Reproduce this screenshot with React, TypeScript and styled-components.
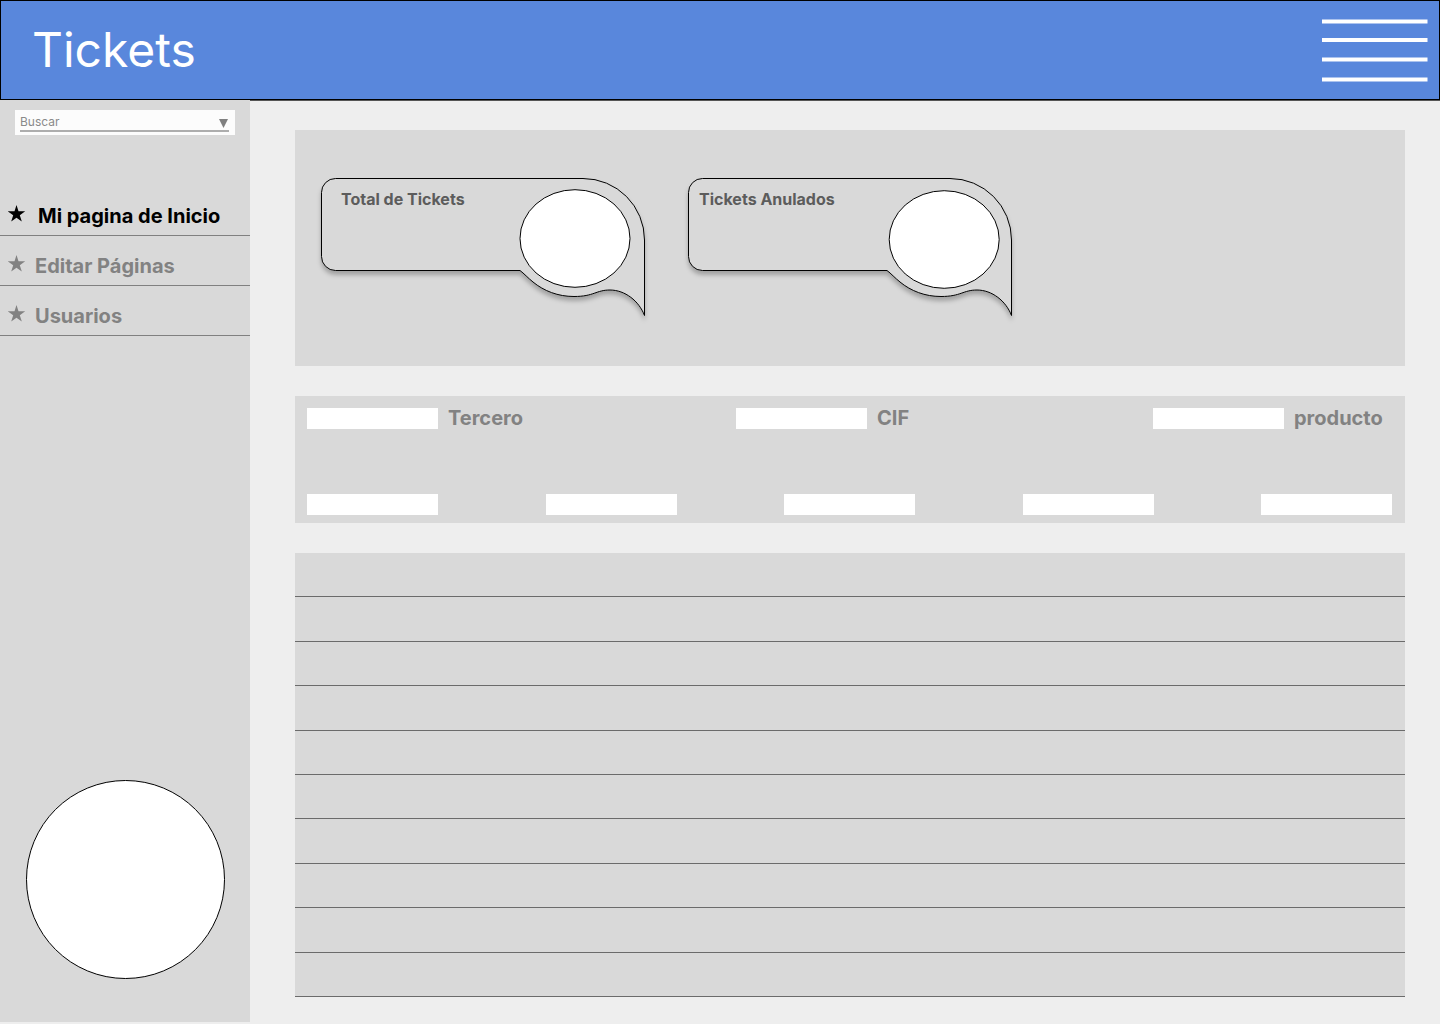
import React from "react";
import styled, { createGlobalStyle } from "styled-components";

const GlobalStyle = createGlobalStyle`
  *, *::before, *::after { box-sizing: border-box; }
  body {
    margin: 0;
    background: #eeeeee;
    font-family: Inter, "Liberation Sans", sans-serif;
  }
  button, input { font: inherit; }
`;

const Page = styled.div`
  display: flex;
  flex-direction: column;
  min-height: 100vh;
`;

const Header = styled.header`
  display: flex;
  align-items: center;
  justify-content: space-between;
  height: 100px;
  padding: 0 11px 0 31px;
  background: #5987dc;
  border: 1px solid #000;
`;

const Title = styled.h1`
  margin: 0;
  font-size: 48px;
  line-height: 58px;
  font-weight: 400;
  color: #fff;
`;

const MenuButton = styled.button`
  display: flex;
  padding: 0;
  border: 0;
  background: none;
  cursor: pointer;
`;

const Body = styled.div`
  display: flex;
  flex: 1;
`;

const Sidebar = styled.aside`
  display: flex;
  flex-direction: column;
  flex: 0 0 250px;
  margin-bottom: 2px;
  padding-top: 10px;
  background: #d9d9d9;
`;

const Search = styled.form`
  margin: 0 15px;
  padding: 4px 6px 3px 5px;
  background: #fcfcfc;
`;

const SearchLine = styled.div`
  display: flex;
  align-items: flex-start;
  height: 18px;
  border-bottom: 2px solid #adadad;
`;

const SearchInput = styled.input`
  flex: 1;
  min-width: 0;
  height: 15px;
  padding: 0;
  border: 0;
  outline: 0;
  background: none;
  font-size: 12px;
  line-height: 15px;
  color: #808080;
  &::placeholder { color: #8a8a8a; opacity: 1; }
`;

const SearchToggle = styled.button`
  display: flex;
  padding: 5px 1px 0;
  border: 0;
  background: none;
  color: #808080;
`;

const Nav = styled.nav`
  margin-top: 51px;
`;

const NavItem = styled.a<{ $active?: boolean }>`
  display: flex;
  align-items: center;
  gap: ${(p) => (p.$active ? 12 : 9)}px;
  height: 50px;
  padding: 10px 8px 0;
  border-bottom: 1px solid #808080;
  font-size: 20px;
  line-height: 24px;
  font-weight: 700;
  text-decoration: none;
  color: ${(p) => (p.$active ? "#000" : "#828282")};
`;

const Star = styled.svg`
  flex: none;
  margin-bottom: 4px;
`;

const Avatar = styled.div`
  width: 199px;
  height: 199px;
  margin: auto auto 43px;
  border: 1px solid #000;
  border-radius: 50%;
  background: #fff;
`;

const Main = styled.main`
  display: flex;
  flex-direction: column;
  flex: 1;
  min-width: 0;
  gap: 30px;
  padding: 29px 35px 27px 45px;
  border-top: 1px solid #555;
`;

const Summary = styled.section`
  display: flex;
  gap: 43px;
  height: 236px;
  padding: 48px 26px;
  background: #d9d9d9;
`;

const Card = styled.article`
  display: grid;
  flex: 0 0 324px;
  height: 140px;
  > * { grid-area: 1 / 1; }
`;

const Bubble = styled.svg`
  overflow: visible;
`;

const BubbleShape = styled.path`
  filter: drop-shadow(0 4px 2px rgba(0, 0, 0, 0.25));
`;

const CardTitle = styled.h2<{ $indent: number }>`
  z-index: 1;
  margin: 11px 0 0 ${(p) => p.$indent}px;
  font-size: 16px;
  line-height: 20px;
  font-weight: 700;
  color: #5c5c5c;
`;

const Filters = styled.form`
  display: flex;
  flex-direction: column;
  justify-content: space-between;
  height: 127px;
  padding: 10px 13px 8px 12px;
  background: #d9d9d9;
`;

const NamedFilters = styled.div`
  display: grid;
  grid-template-columns: 429fr 417fr 239fr;
`;

const FilterLabel = styled.label`
  display: flex;
  align-items: center;
  gap: 10px;
  font-size: 20px;
  line-height: 24px;
  font-weight: 700;
  color: #828282;
`;

const PlainFilters = styled.div`
  display: flex;
  justify-content: space-between;
`;

const FilterInput = styled.input`
  width: 131px;
  height: 21px;
  padding: 0 6px;
  border: 0;
  background: #fff;
  font-size: 12px;
`;

const Table = styled.table`
  width: 100%;
  height: 444px;
  border-collapse: separate;
  border-spacing: 0;
  background: #d9d9d9;
`;

const Cell = styled.td`
  padding: 0;
  border-bottom: 1px solid #6b6b6b;
`;

const NAV = ["Mi pagina de Inicio", "Editar Páginas", "Usuarios"];
const CARDS = [
  { title: "Total de Tickets", indent: 20, cx: 254, cy: 60.5 },
  { title: "Tickets Anulados", indent: 11, cx: 256.2, cy: 61.5 },
];
const FILTERS = ["Tercero", "CIF", "producto"];
const PLAIN = [1, 2, 3, 4, 5];
const ROWS = Array.from({ length: 10 }, (_, i) => i);

export default function App() {
  return (
    <Page>
      <GlobalStyle />
      <Header>
        <Title>Tickets</Title>
        <MenuButton type="button" aria-label="Menú">
          <svg width="106" height="64" viewBox="0 0 106 64" fill="#fff">
            <rect y="1.5" width="105.5" height="4" />
            <rect y="20" width="105.5" height="4" />
            <rect y="39.5" width="105.5" height="4" />
            <rect y="59.5" width="105.5" height="4" />
          </svg>
        </MenuButton>
      </Header>
      <Body>
        <Sidebar>
          <Search onSubmit={(e) => e.preventDefault()}>
            <SearchLine>
              <SearchInput type="text" placeholder="Buscar" aria-label="Buscar" />
              <SearchToggle type="button" aria-label="Mostrar opciones">
                <svg width="9" height="9" viewBox="0 0 9 9">
                  <path d="M0 0H9L4.5 9Z" fill="currentColor" />
                </svg>
              </SearchToggle>
            </SearchLine>
          </Search>
          <Nav>
            {NAV.map((label, i) => (
              <NavItem key={label} href="#" $active={i === 0}>
                <Star width="18" height="17" viewBox="0 0 18 17" fill="currentColor">
                  <path d="M8.5 0L10.5 6.3H17.2L11.8 10.3L13.8 16.6L8.5 12.7L3.2 16.6L5.2 10.3L-.2 6.3H6.5Z" />
                </Star>
                {label}
              </NavItem>
            ))}
          </Nav>
          <Avatar />
        </Sidebar>
        <Main>
          <Summary>
            {CARDS.map((c) => (
              <Card key={c.title}>
                <Bubble width="324" height="140" viewBox="0 0 324 140" stroke="#000">
                  <BubbleShape
                    fill="#d9d9d9"
                    d="M.5 14.5A14 14 0 0 1 14.5 .5H262A61.5 61.5 0 0 1 323.5 62V137.5C318 123 304 112 289 112C275 112 273 118.5 253 118.5C237 118.5 223 113 212 104C207 100 203 95.5 199 92.5H14.5A14 14 0 0 1 .5 78.5Z"
                  />
                  <ellipse cx={c.cx} cy={c.cy} rx="55" ry="48.8" fill="#fff" />
                </Bubble>
                <CardTitle $indent={c.indent}>{c.title}</CardTitle>
              </Card>
            ))}
          </Summary>
          <Filters onSubmit={(e) => e.preventDefault()}>
            <NamedFilters>
              {FILTERS.map((name) => (
                <FilterLabel key={name}>
                  <FilterInput type="text" />
                  {name}
                </FilterLabel>
              ))}
            </NamedFilters>
            <PlainFilters>
              {PLAIN.map((n) => (
                <FilterInput key={n} type="text" aria-label={`Filtro ${n}`} />
              ))}
            </PlainFilters>
          </Filters>
          <Table aria-label="Tickets">
            <tbody>
              {ROWS.map((r) => (
                <tr key={r}>
                  <Cell />
                </tr>
              ))}
            </tbody>
          </Table>
        </Main>
      </Body>
    </Page>
  );
}
